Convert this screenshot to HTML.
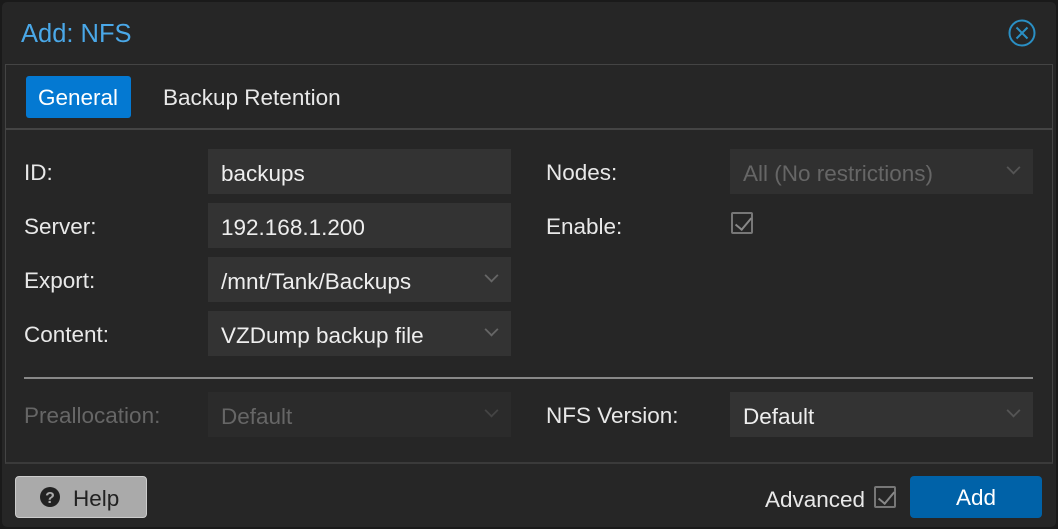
<!DOCTYPE html>
<html><head><style>
*{margin:0;padding:0;box-sizing:border-box}
body{width:1058px;height:529px;background:#1a1a1a;font-family:"Liberation Sans",sans-serif;position:relative;overflow:hidden}
.win{position:absolute;left:2px;top:2px;width:1054px;height:525px;background:#262626;border-radius:5px}
.a{position:absolute}
.title{left:21px;top:20px;color:#4aa8e8;font-size:25.5px}
.panel{left:5px;top:64px;width:1048px;height:400px;border:1px solid #444;border-bottom:2px solid #3a3a3a}
.tabbar{left:5px;top:128px;width:1048px;height:2px;background:#444}
.lbl{color:#e8e8e8;font-size:22.5px}
.fld{background:#333;height:45px;color:#eee;font-size:22.5px;padding:12px 0 0 13px}
.dis{color:#666}
.dfld{background:#2b2b2b;color:#666}
.chev{position:absolute;right:14px;top:13px;width:11px;height:11px;border-right:2px solid #666;border-bottom:2px solid #666;transform:rotate(45deg) scale(.9,.9)}
.chk{width:22px;height:22px;border:2px solid #777;border-radius:2px}
.chk:after{content:"";position:absolute;left:6px;top:0px;width:7px;height:14px;border-right:2px solid #888;border-bottom:2px solid #888;transform:rotate(40deg)}
</style></head><body>
<div class="win"></div>
<div class="a title">Add: NFS</div>
<svg class="a" style="left:1007px;top:18px" width="30" height="30"><circle cx="15" cy="15" r="12.5" fill="none" stroke="#2a8fc4" stroke-width="2"/><path d="M9.5 9.5L20.5 20.5M20.5 9.5L9.5 20.5" stroke="#2a8fc4" stroke-width="2"/></svg>
<div class="a panel"></div>
<div class="a tabbar"></div>
<div class="a" style="left:26px;top:76px;width:105px;height:42px;background:#0479d2;border-radius:3px;color:#fff;font-size:22.5px;padding:9px 0 0 12px">General</div>
<div class="a lbl" style="left:163px;top:85px">Backup Retention</div>

<div class="a lbl" style="left:24px;top:160px">ID:</div>
<div class="a fld" style="left:208px;top:149px;width:303px">backups</div>
<div class="a lbl" style="left:24px;top:214px">Server:</div>
<div class="a fld" style="left:208px;top:203px;width:303px">192.168.1.200</div>
<div class="a lbl" style="left:24px;top:268px">Export:</div>
<div class="a fld" style="left:208px;top:257px;width:303px">/mnt/Tank/Backups<div class="chev"></div></div>
<div class="a lbl" style="left:24px;top:322px">Content:</div>
<div class="a fld" style="left:208px;top:311px;width:303px">VZDump backup file<div class="chev"></div></div>

<div class="a lbl" style="left:546px;top:160px">Nodes:</div>
<div class="a fld dfld" style="left:730px;top:149px;width:303px;background:#303030">All (No restrictions)<div class="chev" style="border-color:#555"></div></div>
<div class="a lbl" style="left:546px;top:214px">Enable:</div>
<div class="a chk" style="left:731px;top:212px"></div>

<div class="a" style="left:24px;top:377px;width:1009px;height:2px;background:#888"></div>

<div class="a lbl dis" style="left:24px;top:403px">Preallocation:</div>
<div class="a fld dfld" style="left:208px;top:392px;width:303px">Default<div class="chev" style="border-color:#444"></div></div>
<div class="a lbl" style="left:546px;top:403px">NFS Version:</div>
<div class="a fld" style="left:730px;top:392px;width:303px">Default<div class="chev" style="border-color:#555"></div></div>

<div class="a" style="left:15px;top:476px;width:132px;height:42px;background:#aaa;border:1px solid #ccc;border-radius:4px;color:#222;font-size:22.5px;padding:9px 0 0 57px">Help</div>
<svg class="a" style="left:39px;top:486px" width="22" height="22"><circle cx="11" cy="11" r="10" fill="#222"/><text x="11" y="17" text-anchor="middle" fill="#aaa" font-family="Liberation Sans" font-weight="bold" font-size="16">?</text></svg>
<div class="a lbl" style="left:765px;top:487px">Advanced</div>
<div class="a chk" style="left:874px;top:486px"></div>
<div class="a" style="left:910px;top:476px;width:132px;height:42px;background:#0062a8;border-radius:4px;color:#fff;font-size:22.5px;text-align:center;padding-top:9px">Add</div>
</body></html>
